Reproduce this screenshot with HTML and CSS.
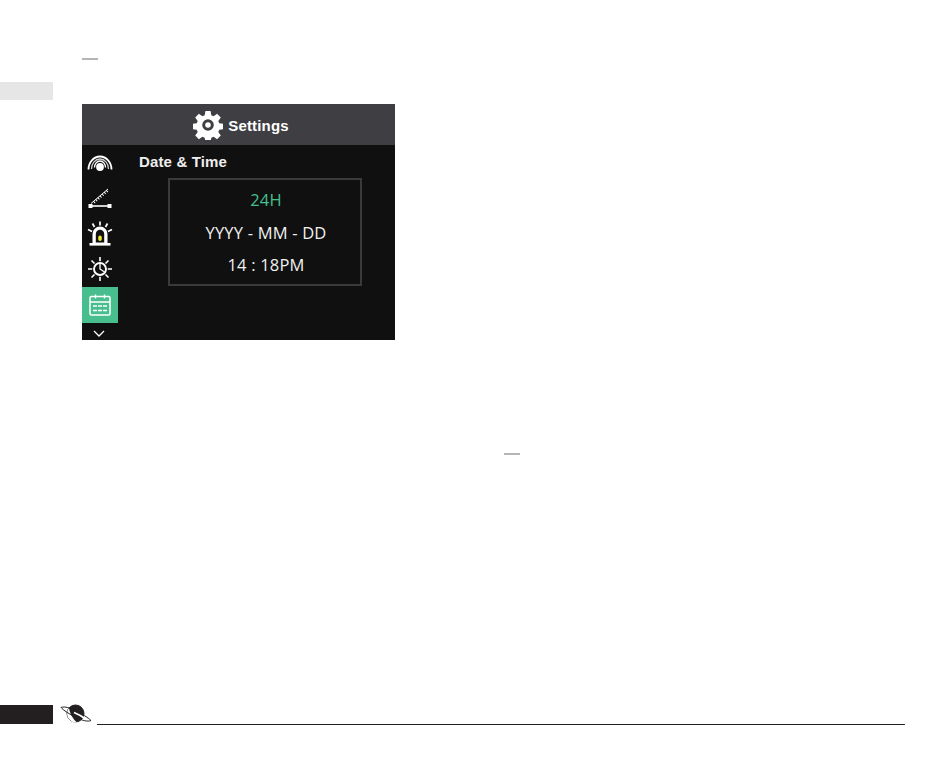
FILE: index.html
```html
<!DOCTYPE html>
<html lang="en">
	<head>
		<meta charset="UTF-8" />
		<meta name="viewport" content="width=device-width, initial-scale=1.0" />
		<title>Settings - Date &amp; Time</title>
		<link rel="stylesheet" href="styles.css">
	</head>

	<body>
		<div class="page">
			<div class="dash"></div>
			<div class="side-tab"></div>

			<div class="screen">
				<div class="screen-header">
					<svg class="gear" viewBox="0 0 30 30">
						<path fill="#fff" fill-rule="evenodd" d="M12.4 1h5.2l.7 4.2 2.3 1 3.5-2.5 3.7 3.7-2.5 3.500 1 2.300 4.200.7v5.200l-4.200.7-1 2.300 2.500 3.500-3.700 3.700-3.500-2.500-2.300 1-.7 4.200h-5.200l-.7-4.200-2.300-1-3.500 2.500-3.700-3.700 2.500-3.500-1-2.300-4.200-.7v-5.200l4.200-.7 1-2.300-2.500-3.500 3.700-3.700 3.500 2.500 2.300-1zM15 9.200a5.800 5.800 0 1 0 0 11.600 5.800 5.800 0 0 0 0-11.600zM15 12.200a2.800 2.800 0 1 1 0 5.600 2.800 2.800 0 0 1 0-5.600z"/>
					</svg>
					<span class="header-title">Settings</span>
				</div>
				<div class="screen-body">
					<div class="sidebar">
						<div class="side-item">
							<svg class="icon" viewBox="0 0 26 26" fill="none" stroke="#fff">
								<path stroke-width="1.800" d="M1.500 19.500A11.500 13 0 0 1 24.500 19.500"/>
								<path stroke-width="1.300" stroke="#ccc" d="M4.500 19A8.500 10 0 0 1 21.500 19"/>
								<path stroke-width="1.300" d="M7.500 17.500A5.500 6.500 0 0 1 18.500 17.500"/>
								<circle cx="13" cy="17" r="3.900" fill="#fff" stroke="none"/>
							</svg>
						</div>
						<div class="side-item">
							<svg class="icon" viewBox="0 0 26 26" fill="none" stroke="#fff">
								<path stroke-width="1.600" d="M3 21h20"/>
								<path stroke-width="1" d="M4 18.500 21 4"/>
								<path stroke-width="2.400" stroke-dasharray="1 1.800" d="M7 17.500 21 5.500"/>
								<rect x="1.500" y="19" width="4" height="4" fill="#fff" stroke="none"/>
								<rect x="20.500" y="19" width="4" height="4" fill="#fff" stroke="none"/>
							</svg>
						</div>
						<div class="side-item">
							<svg class="icon" viewBox="0 0 26 26" fill="none" stroke="#fff" stroke-width="1.700">
								<path d="M13 0.500v4M5.500 2.500l2 3.500M20.500 2.500l-2 3.500M1 8.500l4 2M25 8.500l-4 2"/>
								<path fill="#fff" stroke="none" d="M5.500 22V13a7.500 7.500 0 0 1 15 0v9z"/>
								<path fill="#101010" stroke="none" d="M8.800 21.500V13a4.200 4.200 0 0 1 8.400 0V21.500z"/>
								<rect x="2.500" y="22" width="21" height="2.600" fill="#fff" stroke="none"/>
								<rect x="11.300" y="14.500" width="3.400" height="5.500" rx="1.700" fill="#f2e82a" stroke="none"/>
							</svg>
						</div>
						<div class="side-item">
							<svg class="icon" viewBox="0 0 26 26" fill="none" stroke="#fff" stroke-width="1.600">
								<circle cx="13" cy="13" r="6" stroke-width="1.900"/>
								<path d="M13 1v4.300M13 20.700V25M1 13h4.300M20.700 13H25M4.500 4.500l3 3M21.500 4.500l-3 3M4.500 21.500l3-3M21.500 21.500l-3-3"/>
								<path stroke-width="1.300" d="M13 7.500V13l4.500 3"/>
							</svg>
						</div>
						<div class="side-item active">
							<svg class="icon calendar" viewBox="0 0 22 22" fill="none" stroke="#fff">
								<rect x="1" y="2.500" width="20" height="18.500" rx="1.500" stroke-width="1.500"/>
								<path stroke-width="1.400" d="M1 8h20M6.500 0.500v4M15.500 0.500v4"/>
								<path stroke-width="1.300" d="M4 12h4M9 12h4M14 12h4M4 16.500h4M9 16.500h4M14 16.500h4"/>
							</svg>
						</div>
						<div class="side-more">
							<svg class="chevron" viewBox="0 0 12 7" fill="none" stroke="#fff" stroke-width="1.300">
								<path d="M1 1l5 5 5-5"/>
							</svg>
						</div>
					</div>
					<div class="panel">
						<h2 class="panel-title">Date &amp; Time</h2>
						<div class="options">
							<div class="option selected">24H</div>
							<div class="option">YYYY - MM - DD</div>
							<div class="option">14 : 18PM</div>
						</div>
					</div>
				</div>
			</div>

			<div class="dash dash-second"></div>

			<div class="footer">
				<div class="footer-tab"></div>
				<svg class="logo" viewBox="0 0 32 20" fill="none" stroke="#231f20">
					<circle cx="15.500" cy="9.500" r="8.500" fill="#231f20" stroke-width="1"/>
					<path fill="#fff" stroke="none" d="M9 4c-2.500 3-2.500 8 0 11s5 3.500 8 3.500c-3.500-3-7-8-8-14.500z"/>
					<path stroke="#fff" stroke-width="1.800" d="M14 8.500c4 1.500 9 4.500 13 7.500"/>
					<path stroke-width="1" d="M1 3.500c4-1.500 9 .5 15 3.500s12 6.500 15 9.500c-3 1.500-9 0-15-3S3 6 1 3.500z"/>
				</svg>
				<div class="footer-line"></div>
			</div>
		</div>
	</body>
</html>
```

FILE: styles.css
```css
* {
	box-sizing: border-box;
}
body {
	margin: 0;
	background-color: white;
	font-family: "Liberation Sans", Arial, sans-serif;
}
.page {
	width: 950px;
	height: 760px;
	padding-top: 58px;
	overflow: hidden;
}
.dash {
	width: 16px;
	height: 2px;
	margin-left: 82px;
	background: #b5b5b5;
}
.dash-second {
	margin-top: 113px;
	margin-left: 504px;
}
.side-tab {
	width: 53px;
	height: 18px;
	margin-top: 22px;
	background: #e6e6e6;
}
.screen {
	width: 313px;
	height: 236px;
	margin: 4px 0 0 82px;
	background: #101010;
	color: white;
}
.screen-header {
	display: flex;
	align-items: center;
	justify-content: center;
	gap: 5px;
	height: 41px;
	padding-left: 5px;
	background: #3e3e43;
	font-size: 15px;
	font-weight: bold;
	letter-spacing: 0.15px;
}
.header-title {
	margin-top: 1px;
}
.gear {
	width: 30px;
	height: 30px;
}
.screen-body {
	display: flex;
	height: 195px;
}
.sidebar {
	width: 36px;
}
.side-item {
	display: flex;
	align-items: center;
	justify-content: center;
	height: 35.5px;
}
.side-item.active {
	background: #48bd8e;
}
.icon {
	width: 26px;
	height: 26px;
}
.icon.calendar {
	width: 22px;
	height: 22px;
}
.side-more {
	display: flex;
	justify-content: center;
	padding: 7px 3px 0 0;
}
.chevron {
	width: 12px;
	height: 7px;
}
.panel {
	padding: 8px 0 0 21px;
}
.panel-title {
	margin: 0;
	font-size: 15px;
	font-weight: bold;
	letter-spacing: 0.15px;
	line-height: 17px;
	color: #eee;
}
.options {
	display: flex;
	flex-direction: column;
	justify-content: space-between;
	width: 194px;
	height: 108px;
	margin: 8px 0 0 29px;
	padding: 7px 0 6px 2px;
	border: 2px solid #3a3a3a;
	font-family: "Open Sans", sans-serif;
	font-size: 16.5px;
	letter-spacing: 0.2px;
	line-height: 26px;
	text-align: center;
	color: #f0f0f0;
}
.option.selected {
	color: #45c08e;
}
.footer {
	display: flex;
	align-items: flex-end;
	margin-top: 249px;
}
.footer-tab {
	width: 53px;
	height: 19px;
	margin-bottom: 1px;
	background: #231f20;
}
.logo {
	width: 32px;
	height: 20px;
	margin: 0 0 1px 7px;
}
.footer-line {
	width: 808px;
	height: 1px;
	margin-left: 5px;
	background: #231f20;
}
```
